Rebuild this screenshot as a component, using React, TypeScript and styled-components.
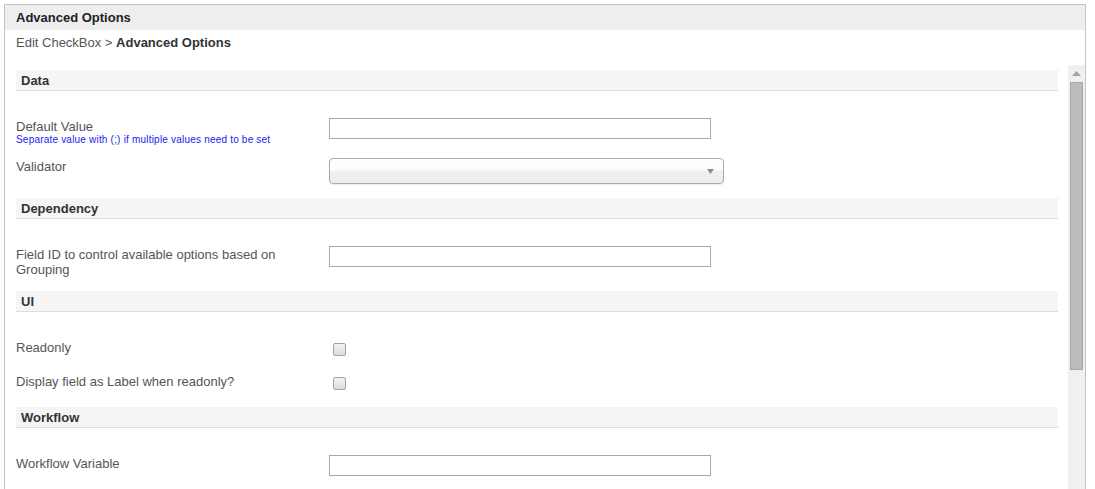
import React from "react";
import styled, { createGlobalStyle } from "styled-components";

const Global = createGlobalStyle`
  html, body { margin: 0; padding: 0; background: #fff; overflow: hidden; }
  body { font-family: "Liberation Sans", Arial, sans-serif; font-size: 13px; color: #555; }
`;

const Frame = styled.div`
  margin: 4px 9px 0 4px;
  border: 1px solid #c4c4c4;
  border-bottom: none;
  height: 520px;
  display: flex;
  flex-direction: column;
`;

const TitleBar = styled.div`
  height: 25px;
  background: #eeeeee;
  padding: 0 11px;
  display: flex;
  align-items: center;
  font-weight: bold;
  color: #222;
  font-size: 13px;
`;

const Crumbs = styled.div`
  height: 35px;
  padding: 5px 11px 0;
  box-sizing: border-box;
  line-height: 15px;
  color: #555;
  b { color: #333; }
`;

const Body = styled.div`
  flex: 1;
  display: flex;
  min-height: 0;
`;

const Content = styled.div`
  flex: 1;
  padding: 5px 10px 0 11px;
  overflow: hidden;
`;

const ScrollBar = styled.div`
  width: 17px;
  background: #f0f0f0;
  display: flex;
  flex-direction: column;
  align-items: center;
`;

const ArrowBtn = styled.div`
  height: 17px;
  width: 17px;
  display: flex;
  align-items: center;
  justify-content: center;
`;

const Thumb = styled.div`
  width: 11px;
  height: 286px;
  background: #bcbcbc;
  border: 1px solid #a6a6a6;
`;

const SectionHeader = styled.div`
  height: 21px;
  box-sizing: border-box;
  background: #f5f5f5;
  border-bottom: 1px solid #dddddd;
  padding: 0 5px;
  display: flex;
  align-items: center;
  font-weight: bold;
  color: #333;
  margin-bottom: 27px;
`;

const Row = styled.div`
  display: grid;
  grid-template-columns: 313px 1fr;
  min-height: 20px;
  margin-bottom: 14px;
  align-items: start;
`;

const Label = styled.div`
  line-height: 15px;
  padding: 1px 30px 0 0;
  color: #555;
`;

const Help = styled.div`
  font-size: 10px;
  line-height: 12px;
  margin-bottom: -2px;
  color: #1a1aee;
  letter-spacing: 0.2px;
`;

const TextInput = styled.input`
  width: 382px;
  height: 21px;
  box-sizing: border-box;
  border: 1px solid #a9a9a9;
  margin: 0;
  padding: 0 4px;
  font: inherit;
`;

const SelectBox = styled.div`
  width: 395px;
  height: 26px;
  box-sizing: border-box;
  border: 1px solid #aaaaaa;
  border-radius: 4px;
  background: linear-gradient(#ffffff 0%, #fdfdfd 45%, #f0f0f0 50%, #ededed 100%);
  box-shadow: 0 1px 1px rgba(0,0,0,0.08);
  display: flex;
  align-items: center;
  justify-content: flex-end;
  padding-right: 9px;
`;

const Check = styled.span`
  display: block;
  width: 11px;
  height: 11px;
  margin: 4px 0 0 4px;
  border: 1px solid #a3a3a3;
  border-radius: 2px;
  background: linear-gradient(#f2f2f2, #dcdcdc);
`;

const Section: React.FC<{ title: string; children: React.ReactNode }> = ({ title, children }) => (
  <>
    <SectionHeader>{title}</SectionHeader>
    {children}
  </>
);

export default function App() {
  return (
    <>
      <Global />
      <Frame>
        <TitleBar>Advanced Options</TitleBar>
        <Crumbs>
          Edit CheckBox &gt; <b>Advanced Options</b>
        </Crumbs>
        <Body>
          <Content>
            <Section title="Data">
              <Row>
                <Label>
                  Default Value
                  <Help>Separate value with (;) if multiple values need to be set</Help>
                </Label>
                <TextInput type="text" />
              </Row>
              <Row>
                <Label>Validator</Label>
                <SelectBox>
                  <svg width="7" height="5" viewBox="0 0 7 5">
                    <path d="M0 0 H7 L3.5 5 Z" fill="#8a8a8a" />
                  </svg>
                </SelectBox>
              </Row>
            </Section>
            <Section title="Dependency">
              <Row>
                <Label>Field ID to control available options based on Grouping</Label>
                <TextInput type="text" />
              </Row>
            </Section>
            <Section title="UI">
              <Row>
                <Label>Readonly</Label>
                <Check />
              </Row>
              <Row>
                <Label>Display field as Label when readonly?</Label>
                <Check />
              </Row>
            </Section>
            <Section title="Workflow">
              <Row>
                <Label>Workflow Variable</Label>
                <TextInput type="text" />
              </Row>
            </Section>
          </Content>
          <ScrollBar>
            <ArrowBtn>
              <svg width="9" height="5" viewBox="0 0 9 5">
                <path d="M0 5 L4.5 0 L9 5 Z" fill="#a3a3a3" />
              </svg>
            </ArrowBtn>
            <Thumb />
          </ScrollBar>
        </Body>
      </Frame>
    </>
  );
}
